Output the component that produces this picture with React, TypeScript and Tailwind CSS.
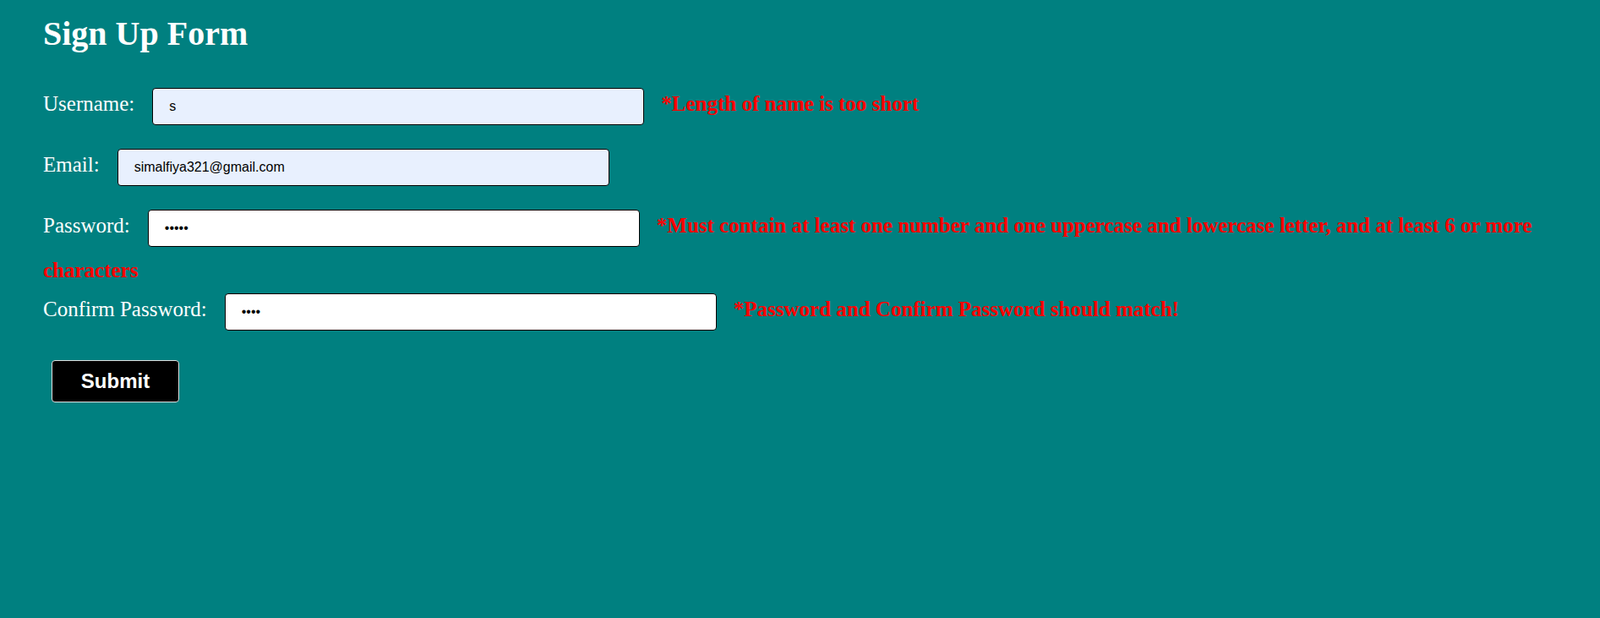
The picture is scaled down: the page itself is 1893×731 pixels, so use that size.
import { useState } from 'react'

const serif = 'font-["Liberation_Serif","Times_New_Roman",serif]'

export default function App(): JSX.Element {
  const [username, setUsername] = useState('s')
  const [email, setEmail] = useState('simalfiya321@gmail.com')
  const [password, setPassword] = useState('abcde')
  const [confirm, setConfirm] = useState('abcd')

  const inputBase =
    'inline-block h-[44px] w-[582px] my-[14px] ml-[21px] pl-[19px] pr-2 align-baseline border border-black rounded-[4px] text-[16px] leading-[normal] text-black font-["Liberation_Sans",Arial,sans-serif] outline-none'

  return (
    <div className={`min-h-[731px] w-full bg-[#008080] pl-[51px] ${serif}`}>
      <h1 className="pt-[17px] mb-[27px] text-[40px] leading-[46px] font-bold text-white">Sign Up Form</h1>

      <form onSubmit={(e) => e.preventDefault()}>
        {/* Username */}
        <div className="text-[25px] leading-[27px]">
          <label className="text-white">Username:</label>
          <input
            type="text"
            value={username}
            onChange={(e) => setUsername(e.target.value)}
            className={`${inputBase} bg-[#e8f0fe]`}
          />
          <span className="ml-[20px] font-bold text-[#ff0000]">*Length of name is too short</span>
        </div>

        {/* Email */}
        <div className="text-[25px] leading-[27px]">
          <label className="text-white">Email:</label>
          <input
            type="email"
            value={email}
            onChange={(e) => setEmail(e.target.value)}
            className={`${inputBase} bg-[#e8f0fe]`}
          />
        </div>

        {/* Password */}
        <div className="text-[25px] leading-[27px]">
          <label className="text-white">Password:</label>
          <input
            type="password"
            value={password}
            onChange={(e) => setPassword(e.target.value)}
            className={`${inputBase} bg-white`}
          />
          <span className="ml-[20px] font-bold text-[#ff0000]">
            *Must contain at least one number and one uppercase and lowercase letter, and at least 6 or more
            characters
          </span>
        </div>

        {/* Confirm Password */}
        <div className="text-[25px] leading-[27px]">
          <label className="text-white">Confirm Password:</label>
          <input
            type="password"
            value={confirm}
            onChange={(e) => setConfirm(e.target.value)}
            className={`${inputBase} bg-white`}
          />
          <span className="ml-[20px] font-bold text-[#ff0000]">*Password and Confirm Password should match!</span>
        </div>

        <div className="mt-[21px] ml-[10px]">
          <button
            type="submit"
            className='h-[50px] w-[151px] rounded-[4px] border border-[#e0e0e0] bg-black text-[24px] leading-[normal] font-bold text-white font-["Liberation_Sans",Arial,sans-serif]'
          >
            Submit
          </button>
        </div>
      </form>
    </div>
  )
}
